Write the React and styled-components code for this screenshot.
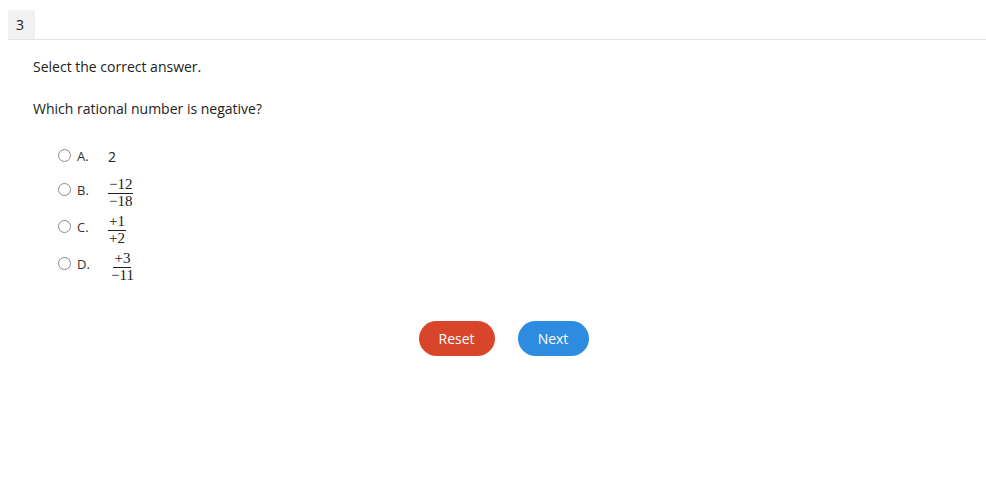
import React from 'react';
import styled, { createGlobalStyle } from 'styled-components';

const GlobalStyle = createGlobalStyle`
  body {
    margin: 0;
    background: #fff;
    font-family: "Open Sans", "Liberation Sans", sans-serif;
    color: #222;
  }
`;

const Page = styled.div`
  width: 986px;
  height: 491px;
  padding-top: 10px;
  box-sizing: border-box;
`;

const TabBar = styled.div`
  margin-left: 8px;
  display: flex;
  border-bottom: 1px solid #e4e4e4;
`;

const Tab = styled.div`
  width: 27px;
  height: 29px;
  background: #f1f1f1;
  font-size: 14px;
  line-height: 29px;
  padding-left: 8px;
  box-sizing: border-box;
`;

const Body = styled.div`
  padding: 17px 33px 0;
`;

const Prompt = styled.p`
  margin: 0;
  font-size: 14px;
  line-height: 20px;
  margin-bottom: ${(p) => p.$gap || 0}px;
`;

const Options = styled.div`
  display: flex;
  flex-direction: column;
  padding-left: 25px;
  margin-top: 20px;
  gap: 3px;
`;

const Option = styled.label`
  display: flex;
  align-items: center;
  height: 34px;
  font-size: 13px;
`;

const Marker = styled.span`
  display: flex;
  align-items: center;
  margin-bottom: ${(p) => p.$lift || 0}px;
`;

const Radio = styled.span`
  width: 11px;
  height: 11px;
  border: 1px solid #8a8a8a;
  border-radius: 50%;
  background: #fff;
  flex: none;
  margin-right: 6px;
  margin-top: -1px;
`;

const Letter = styled.span`
  width: 31px;
  color: #333;
`;

const Value = styled.span`
  font-size: 14px;
`;

const Frac = styled.span`
  display: inline-flex;
  flex-direction: column;
  align-items: center;
  font-family: "Liberation Serif", "DejaVu Serif", serif;
  font-size: 15px;
  line-height: 13px;
  margin-left: ${(p) => p.$indent || 0}px;
  color: #222;
`;

const Num = styled.span`
  padding: 0 1px 2px;
  border-bottom: 1px solid #222;
`;

const Den = styled.span`
  padding: 1px 1px 0;
`;

const Actions = styled.div`
  display: flex;
  justify-content: center;
  gap: 23px;
  margin-top: 37px;
  padding-left: 21px;
`;

const Button = styled.button`
  height: 35px;
  width: ${(p) => p.$w}px;
  border: none;
  border-radius: 18px;
  background: ${(p) => p.$bg};
  color: #fff;
  font-family: "Open Sans", sans-serif;
  font-size: 14px;
  cursor: pointer;
`;

const options = [
  { key: 'A.', plain: '2' },
  { key: 'B.', num: '−12', den: '−18' },
  { key: 'C.', num: '+1', den: '+2' },
  { key: 'D.', num: '+3', den: '−11', indent: 2 },
];

export default function App() {
  return (
    <Page>
      <GlobalStyle />
      <TabBar>
        <Tab>3</Tab>
      </TabBar>
      <Body>
        <Prompt $gap={22}>Select the correct answer.</Prompt>
        <Prompt>Which rational number is negative?</Prompt>
        <Options>
          {options.map((o) => (
            <Option key={o.key}>
              <Marker $lift={o.plain ? 0 : 7}>
                <Radio />
                <Letter>{o.key}</Letter>
              </Marker>
              {o.plain ? (
                <Value>{o.plain}</Value>
              ) : (
                <Frac $indent={o.indent}>
                  <Num>{o.num}</Num>
                  <Den>{o.den}</Den>
                </Frac>
              )}
            </Option>
          ))}
        </Options>
        <Actions>
          <Button $w={76} $bg="#d8452b">Reset</Button>
          <Button $w={71} $bg="#2d8ce0">Next</Button>
        </Actions>
      </Body>
    </Page>
  );
}
